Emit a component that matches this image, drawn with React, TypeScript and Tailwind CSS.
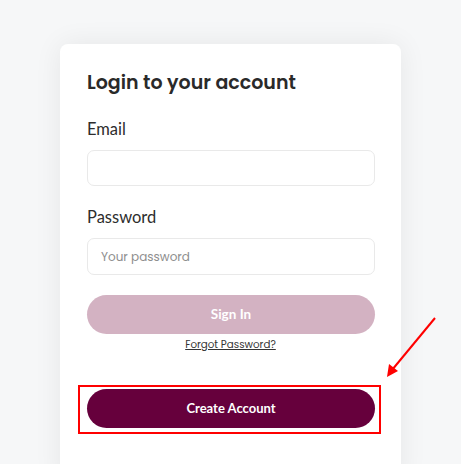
import React from "react";

export default function App() {
  return (
    <div className="relative w-[461px] h-[464px] overflow-hidden bg-[#f6f7f8]">
      <div className="mx-auto mt-[44px] w-[341px] h-[440px] rounded-t-[8px] bg-white shadow-[0_0_28px_rgba(0,0,0,0.07)] px-[27px] pt-[25px] flex flex-col">
        <h1 className="text-[19px] leading-[28px] font-semibold text-[#2a2a2a]" style={{ fontFamily: "Poppins, Inter, sans-serif" }}>
          Login to your account
        </h1>
        <label className="mt-[20px] text-[16.5px] leading-[24px] text-[#2d2d2d]" style={{ fontFamily: "Lato, sans-serif" }}>
          Email
        </label>
        <div className="mt-[9px] h-[36px] w-[288px] rounded-[7px] border border-[#e9e9e9] bg-white" />
        <label className="mt-[19px] text-[16.5px] leading-[24px] text-[#2d2d2d]" style={{ fontFamily: "Lato, sans-serif" }}>
          Password
        </label>
        <div className="mt-[9px] h-[37px] w-[288px] rounded-[7px] border border-[#e9e9e9] bg-white flex items-center pl-[13px]">
          <span className="text-[12px] text-[#8e8e8e]" style={{ fontFamily: "Poppins, Inter, sans-serif" }}>Your password</span>
        </div>
        <button className="mt-[20px] h-[39px] w-[288px] rounded-full bg-[#d3b2c2] text-white text-[13.5px] font-bold" style={{ fontFamily: "Lato, sans-serif" }}>
          Sign In
        </button>
        <div className="mt-[3px] text-center text-[10.3px] leading-[16px] text-[#333] underline" style={{ fontFamily: "Poppins, Inter, sans-serif" }}>
          Forgot Password?
        </div>
        <div className="relative mt-[36px] w-[288px]">
          <button className="h-[39px] w-[288px] rounded-full bg-[#66003c] text-white text-[13px] font-bold" style={{ fontFamily: "Lato, sans-serif" }}>
            Create Account
          </button>
          <div className="absolute -left-[9px] -right-[6px] -top-[4px] -bottom-[6px] border-2 border-[#ff0000]" />
        </div>
      </div>
      <svg className="absolute left-0 top-0" width="461" height="464" viewBox="0 0 461 464">
        <line x1="435" y1="318" x2="392" y2="370" stroke="#ff0000" strokeWidth="2" />
        <polygon points="387,377 389,364 398,371" fill="#ff0000" />
      </svg>
    </div>
  );
}
